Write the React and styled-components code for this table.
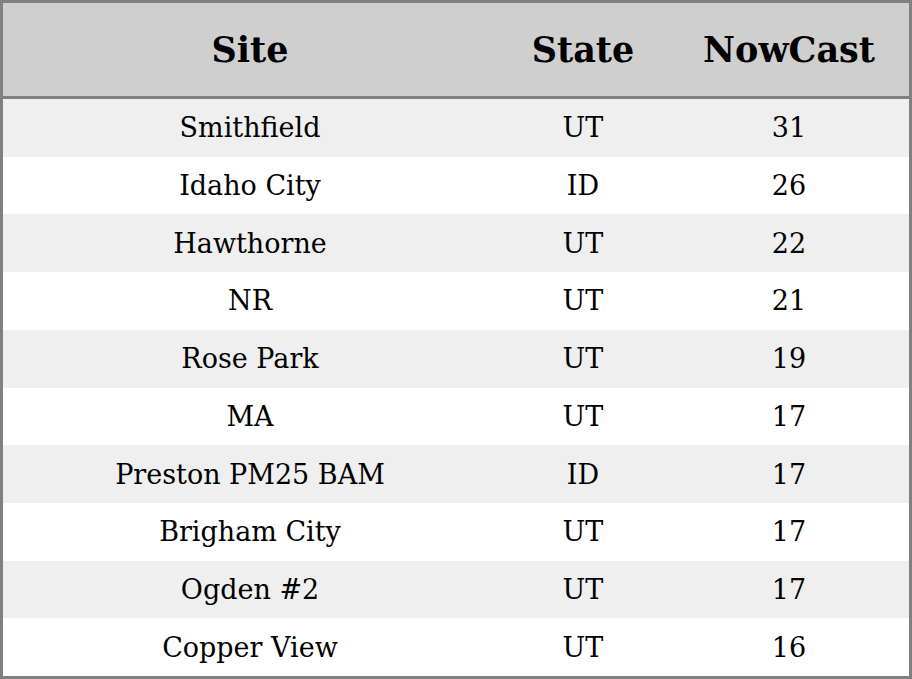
import React from 'react';
import styled, { createGlobalStyle } from 'styled-components';

const GlobalStyle = createGlobalStyle`
    html, body {
        margin: 0;
        padding: 0;
        background: #FFFFFF;
    }
    * {
        box-sizing: border-box;
    }
`

const TableDiv = styled.div`
    width: 100vw;
    height: 100vh;
    border: 3px solid #808080;
    display: flex;
    flex-direction: column;
    font-family: "DejaVu Serif", serif;
    color: #000000;
`

const columns = '494px 172px 1fr'

const HeadRow = styled.div`
    height: 96px;
    flex: none;
    display: grid;
    grid-template-columns: ${columns};
    align-items: center;
    background: #CFCFCF;
    border-bottom: 3px solid #808080;
    font-weight: bold;
    font-size: 35px;
`

const BodyRow = styled.div`
    flex: 1;
    display: grid;
    grid-template-columns: ${columns};
    align-items: center;
    background: ${props => props.striped ? '#EFEFEF' : '#FFFFFF'};
    font-size: 27px;
`

const Cell = styled.div`
    text-align: center;
    white-space: nowrap;
`

const rows = [
    { site: 'Smithfield', state: 'UT', nowcast: 31 },
    { site: 'Idaho City', state: 'ID', nowcast: 26 },
    { site: 'Hawthorne', state: 'UT', nowcast: 22 },
    { site: 'NR', state: 'UT', nowcast: 21 },
    { site: 'Rose Park', state: 'UT', nowcast: 19 },
    { site: 'MA', state: 'UT', nowcast: 17 },
    { site: 'Preston PM25 BAM', state: 'ID', nowcast: 17 },
    { site: 'Brigham City', state: 'UT', nowcast: 17 },
    { site: 'Ogden #2', state: 'UT', nowcast: 17 },
    { site: 'Copper View', state: 'UT', nowcast: 16 },
]

export default function App() {
    return (
        <>
            <GlobalStyle />
            <TableDiv>
                <HeadRow>
                    <Cell>Site</Cell>
                    <Cell>State</Cell>
                    <Cell>NowCast</Cell>
                </HeadRow>
                {rows.map((item, key) => (
                    <BodyRow key={key} striped={key % 2 === 0}>
                        <Cell>{item.site}</Cell>
                        <Cell>{item.state}</Cell>
                        <Cell>{item.nowcast}</Cell>
                    </BodyRow>
                ))}
            </TableDiv>
        </>
    )
}
